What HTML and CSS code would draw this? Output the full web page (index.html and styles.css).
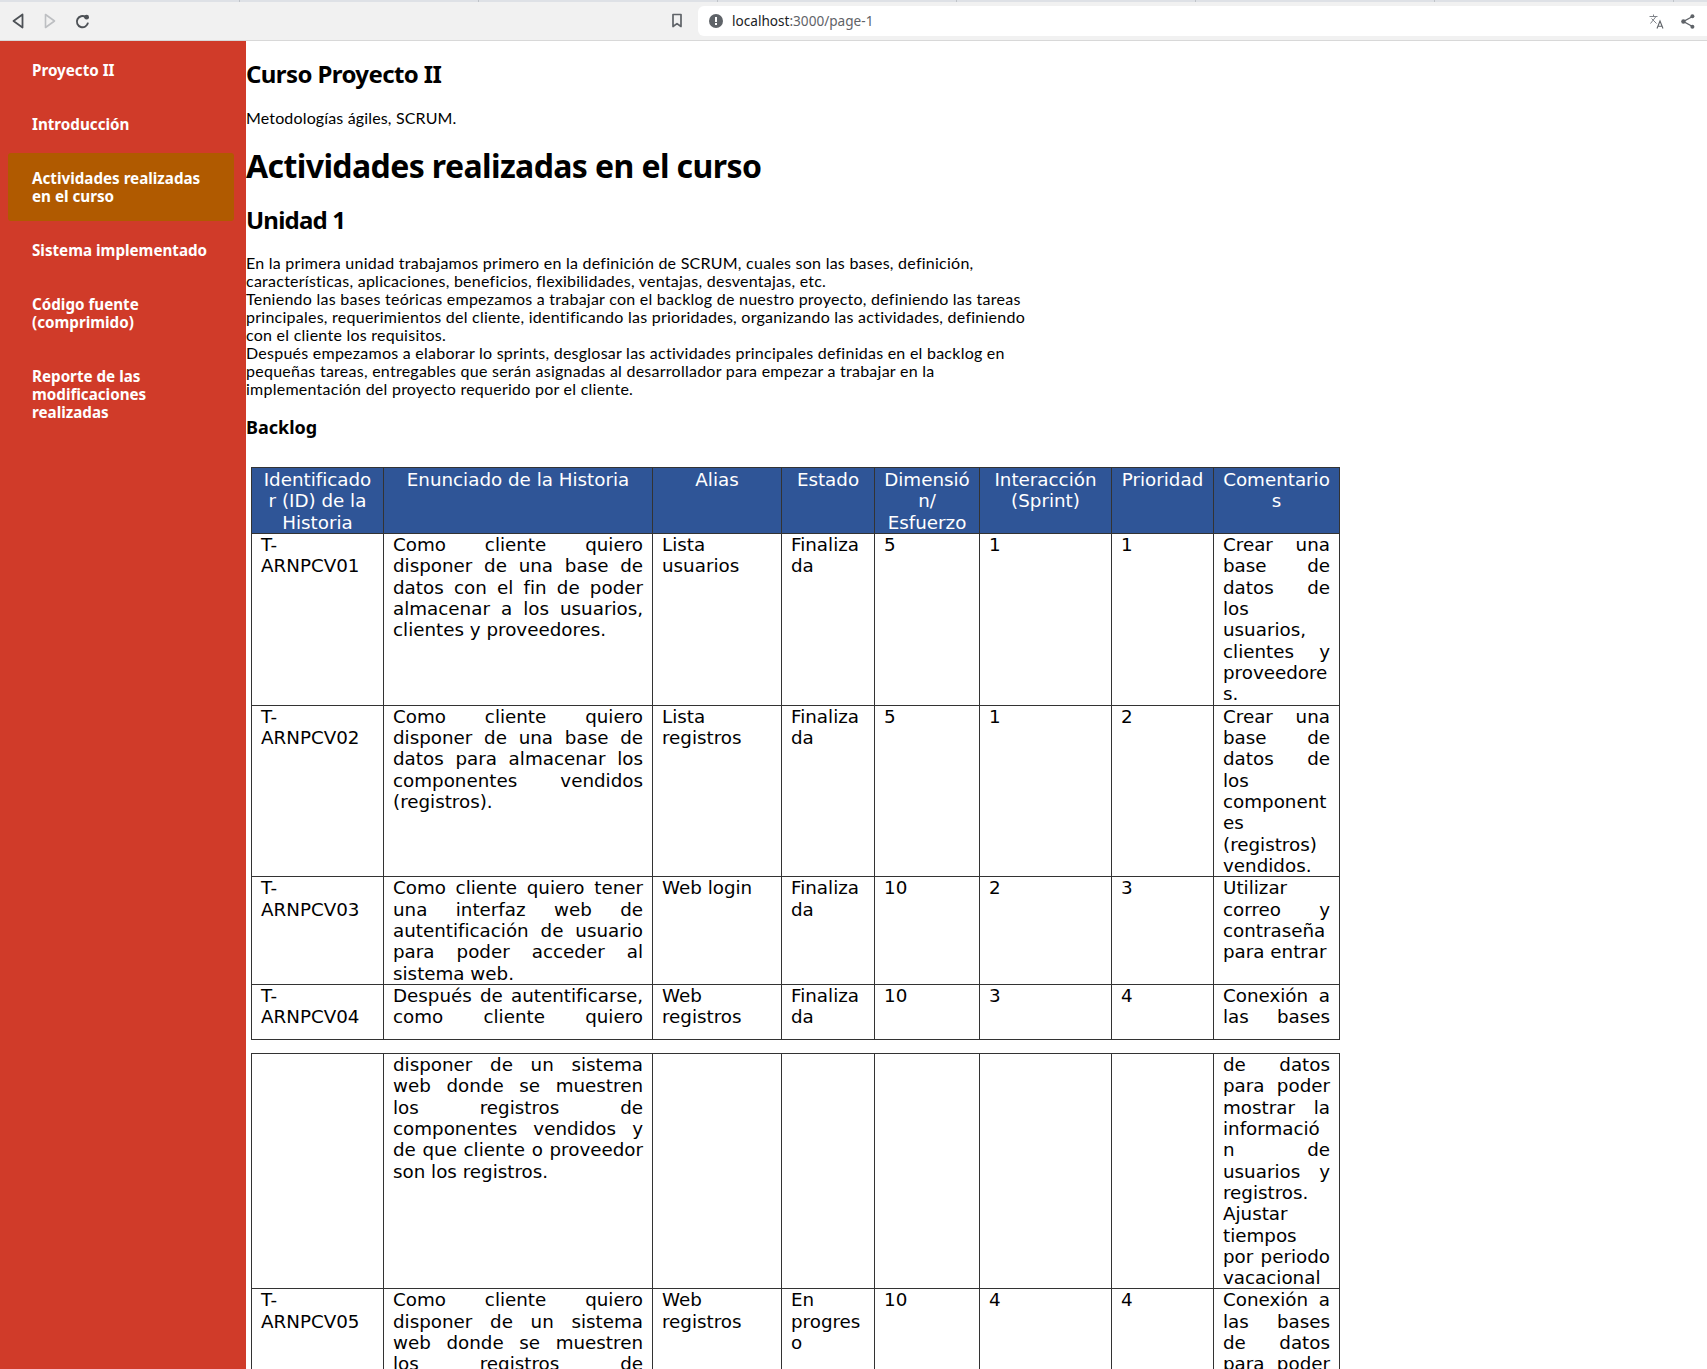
FILE: index.html

```html
<!DOCTYPE html>
<html lang="es">
<head>
  <meta charset="UTF-8" />
  <title>Curso Proyecto II</title>
  <link rel="stylesheet" href="styles.css">
</head>
<body>
  <div class="tabstrip">
    <span class="tabstrip-sep"></span>
    <span class="tabstrip-sep"></span>
    <span class="tabstrip-sep"></span>
    <span class="tabstrip-sep"></span>
    <span class="tabstrip-sep"></span>
    <span class="tabstrip-sep"></span>
    <span class="tabstrip-sep"></span>
  </div>
  <header class="toolbar">
    <div class="nav-icons">
      <svg class="back" width="12" height="16" viewBox="0 0 12 16"><path d="M10.5 1.5 1.5 8l9 6.5z" fill="none" stroke="#4d5156" stroke-width="1.8" stroke-linejoin="round"/></svg>
      <svg class="forward" width="12" height="16" viewBox="0 0 12 16"><path d="M1.5 1.5l9 6.5-9 6.5z" fill="none" stroke="#bdbfc2" stroke-width="1.6" stroke-linejoin="round"/></svg>
      <svg class="reload" width="15" height="15" viewBox="0 0 15 15"><path d="M13 8.6A5.6 5.6 0 1 1 10.6 3" fill="none" stroke="#4d5156" stroke-width="1.9"/><circle cx="11.6" cy="3.2" r="2.4" fill="#4d5156"/></svg>
    </div>
    <svg class="bookmark" width="12" height="15" viewBox="0 0 12 15"><path d="M2 1.5h8v12L6 10.6 2 13.5z" fill="none" stroke="#5f6368" stroke-width="1.7" stroke-linejoin="round"/></svg>
    <div class="address">
      <svg class="info" width="14" height="14" viewBox="0 0 14 14"><circle cx="7" cy="7" r="7" fill="#5f6368"/><rect x="6" y="3" width="2" height="5" fill="#fff"/><rect x="6" y="9" width="2" height="2" fill="#fff"/></svg>
      <span class="url"><span class="url-host">localhost</span>:3000/page-1</span>
      <svg class="translate" width="15" height="15" viewBox="0 0 15 15"><path d="M.5 2.5h8M4.5 .5v2M7 2.5 1.5 9.5M2.5 4.5l5 5" fill="none" stroke="#80848a" stroke-width="1"/><path d="M8 14.5l3-7.5 3 7.5M9.1 12.2h3.8" fill="none" stroke="#5f6368" stroke-width="1.1"/></svg>
      <svg class="share" width="14" height="15" viewBox="0 0 14 15"><path d="M11.5 2.5 2.5 7.5l9 5" fill="none" stroke="#5f6368" stroke-width="1.4"/><circle cx="11.4" cy="2.2" r="2" fill="#5f6368"/><circle cx="2.4" cy="7.5" r="2.2" fill="#5f6368"/><circle cx="11.4" cy="12.8" r="2" fill="#5f6368"/></svg>
    </div>
  </header>

  <div class="layout">
    <nav class="sidebar">
      <a class="nav-item" href="#">Proyecto II</a>
      <a class="nav-item" href="#">Introducción</a>
      <a class="nav-item active" href="#">Actividades realizadas<br>en el curso</a>
      <a class="nav-item" href="#">Sistema implementado</a>
      <a class="nav-item" href="#">Código fuente<br>(comprimido)</a>
      <a class="nav-item" href="#">Reporte de las<br>modificaciones<br>realizadas</a>
    </nav>

    <main class="content">
      <h2 class="course-title">Curso Proyecto II</h2>
      <p class="subtitle">Metodologías ágiles, SCRUM.</p>
      <h1 class="page-title">Actividades realizadas en el curso</h1>
      <h2 class="unit-title">Unidad 1</h2>
      <p class="summary">
        En la primera unidad trabajamos primero en la definición de SCRUM, cuales son las bases, definición,<br>
        características, aplicaciones, beneficios, flexibilidades, ventajas, desventajas, etc.<br>
        Teniendo las bases teóricas empezamos a trabajar con el backlog de nuestro proyecto, definiendo las tareas<br>
        principales, requerimientos del cliente, identificando las prioridades, organizando las actividades, definiendo<br>
        con el cliente los requisitos.<br>
        Después empezamos a elaborar lo sprints, desglosar las actividades principales definidas en el backlog en<br>
        pequeñas tareas, entregables que serán asignadas al desarrollador para empezar a trabajar en la<br>
        implementación del proyecto requerido por el cliente.
      </p>
      <h3 class="backlog-title">Backlog</h3>

      <table class="backlog first">
        <colgroup>
          <col class="c1"><col class="c2"><col class="c3"><col class="c4"><col class="c5"><col class="c6"><col class="c7"><col class="c8">
        </colgroup>
        <thead>
          <tr>
            <th>Identificador (ID) de la Historia</th>
            <th>Enunciado de la Historia</th>
            <th>Alias</th>
            <th>Estado</th>
            <th>Dimensión/ Esfuerzo</th>
            <th>Interacción (Sprint)</th>
            <th>Prioridad</th>
            <th>Comentarios</th>
          </tr>
        </thead>
        <tbody>
          <tr>
            <td>T-ARNPCV01</td>
            <td class="just">Como cliente quiero disponer de una base de datos con el fin de poder almacenar a los usuarios, clientes y proveedores.</td>
            <td>Lista usuarios</td>
            <td>Finalizada</td>
            <td>5</td>
            <td>1</td>
            <td>1</td>
            <td class="just">Crear una base de datos de los usuarios, clientes y proveedores.</td>
          </tr>
          <tr>
            <td>T-ARNPCV02</td>
            <td class="just">Como cliente quiero disponer de una base de datos para almacenar los componentes vendidos (registros).</td>
            <td>Lista registros</td>
            <td>Finalizada</td>
            <td>5</td>
            <td>1</td>
            <td>2</td>
            <td class="just">Crear una base de datos de los componentes (registros) vendidos.</td>
          </tr>
          <tr>
            <td>T-ARNPCV03</td>
            <td class="just">Como cliente quiero tener una interfaz web de autentificación de usuario para poder acceder al sistema web.</td>
            <td>Web login</td>
            <td>Finalizada</td>
            <td>10</td>
            <td>2</td>
            <td>3</td>
            <td class="just">Utilizar correo y contraseña para entrar</td>
          </tr>
          <tr class="split-row">
            <td>T-ARNPCV04</td>
            <td class="just cut">Después de autentificarse, como cliente quiero</td>
            <td>Web registros</td>
            <td>Finalizada</td>
            <td>10</td>
            <td>3</td>
            <td>4</td>
            <td class="just cut">Conexión a las bases</td>
          </tr>
        </tbody>
      </table>

      <table class="backlog second">
        <colgroup>
          <col class="c1"><col class="c2"><col class="c3"><col class="c4"><col class="c5"><col class="c6"><col class="c7"><col class="c8">
        </colgroup>
        <tbody>
          <tr>
            <td></td>
            <td class="just">disponer de un sistema web donde se muestren los registros de componentes vendidos y de que cliente o proveedor son los registros.</td>
            <td></td>
            <td></td>
            <td></td>
            <td></td>
            <td></td>
            <td class="just">de datos para poder mostrar la información de usuarios y registros. Ajustar tiempos por periodo vacacional</td>
          </tr>
          <tr>
            <td>T-ARNPCV05</td>
            <td class="just">Como cliente quiero disponer de un sistema web donde se muestren los registros de componentes vendidos.</td>
            <td>Web registros</td>
            <td>En progreso</td>
            <td>10</td>
            <td>4</td>
            <td>4</td>
            <td class="just">Conexión a las bases de datos para poder mostrar la información.</td>
          </tr>
        </tbody>
      </table>
    </main>
  </div>
</body>
</html>
```

FILE: styles.css

```css
html, body {
  margin: 0;
  height: 1369px;
  overflow: hidden;
  background: #fff;
}
body {
  font-family: Lato, "Noto Sans", sans-serif;
  color: #000;
}

/* browser chrome */
.tabstrip {
  height: 2px;
  background: #dee1e6;
  display: flex;
  gap: 238px;
  padding-left: 239px;
}
.tabstrip-sep {
  width: 1px;
  background: #bfc3c8;
}
.toolbar {
  height: 34px;
  padding: 4px 0 0 12px;
  background: #f1f1f1;
  border-bottom: 1px solid #d8d8d8;
  display: flex;
  align-items: flex-start;
}
.nav-icons {
  display: flex;
  align-items: center;
  height: 30px;
  width: 659px;
}
.forward {
  margin-left: 20px;
}
.reload {
  margin-left: 19px;
}
.bookmark {
  margin-top: 7px;
  margin-right: 15px;
}
.address {
  flex: 1;
  height: 30px;
  background: #fff;
  border-radius: 6px 0 0 6px;
  display: flex;
  align-items: center;
  padding-left: 11px;
  padding-right: 12px;
}
.info {
  margin-right: 9px;
}
.url {
  font-family: "Noto Sans", sans-serif;
  font-size: 13.6px;
  color: #5f6368;
  flex: 1;
  margin-top: -2px;
}
.url-host {
  color: #202124;
}
.translate {
  margin-right: 17px;
}

.layout {
  display: flex;
  height: 1328px;
}

/* sidebar */
.sidebar {
  width: 246px;
  flex-shrink: 0;
  background: #d03b29;
  padding: 4px 12px 0 8px;
  box-sizing: border-box;
}
.nav-item {
  display: block;
  padding: 16px 24px;
  margin-bottom: 4px;
  font-family: "Noto Sans", sans-serif;
  font-size: 15.2px;
  line-height: 18px;
  font-weight: 700;
  color: #fff;
  text-decoration: none;
  border-radius: 3px;
  white-space: nowrap;
}
.nav-item.active {
  background: #b05a00;
}

/* content */
.content {
  flex: 1;
  min-width: 0;
  overflow: hidden;
}
.course-title, .unit-title, .page-title, .backlog-title {
  font-family: "Noto Sans", sans-serif;
}
.course-title {
  font-size: 24px;
  line-height: 28px;
  letter-spacing: -.6px;
  margin: 19px 0 21px;
}
.subtitle {
  font-size: 16px;
  line-height: 18px;
  letter-spacing: .15px;
  margin: 0 0 20px;
}
.page-title {
  font-size: 32px;
  line-height: 37px;
  letter-spacing: -.6px;
  margin: 0 0 22px;
}
.unit-title {
  font-size: 24px;
  line-height: 28px;
  letter-spacing: -.8px;
  margin: 0 0 20px;
}
.summary {
  font-size: 16px;
  line-height: 18px;
  letter-spacing: .25px;
  margin: 0 0 19px;
  white-space: nowrap;
}
.backlog-title {
  font-size: 18px;
  line-height: 21px;
  margin: 0 0 29px;
}

/* backlog tables */
.backlog {
  table-layout: fixed;
  border-collapse: collapse;
  width: 1088px;
  margin-left: 5px;
  font-family: "DejaVu Sans", sans-serif;
  font-size: 18.3px;
  line-height: 21.33px;
}
.backlog th, .backlog td {
  border: 1px solid #333;
  padding: 0 9px;
  vertical-align: top;
  overflow-wrap: anywhere;
  text-align: left;
}
.backlog th {
  padding-top: 1px;
  background: #2f5597;
  color: #fff;
  font-weight: 400;
  text-align: center;
}
.backlog .just {
  text-align: justify;
}
.backlog .cut {
  text-align-last: justify;
}
.split-row td {
  height: 54px;
}
.second {
  margin-top: 13px;
}
.c1 { width: 132px; }
.c2 { width: 269px; }
.c3 { width: 129px; }
.c4 { width: 93px; }
.c5 { width: 105px; }
.c6 { width: 132px; }
.c7 { width: 102px; }
.c8 { width: 126px; }
```
